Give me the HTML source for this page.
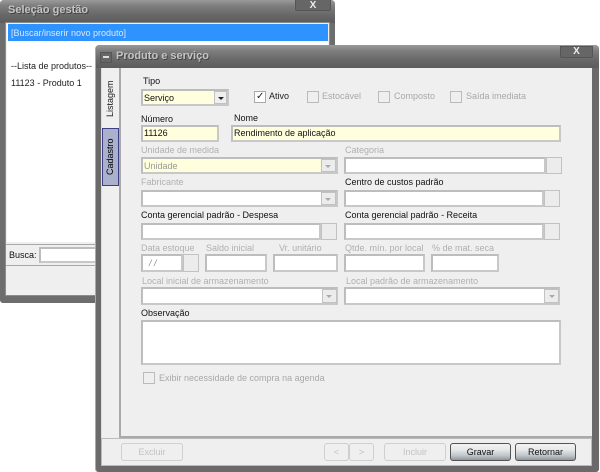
<!DOCTYPE html>
<html><head><meta charset="utf-8">
<style>
html,body{margin:0;padding:0;background:#fff}
#p{position:relative;width:600px;height:472px;overflow:hidden;background:#fff;font:9px/12px "Liberation Sans",sans-serif;color:#222}
#p div,#p span.t{position:absolute;box-sizing:border-box;white-space:nowrap}
.l{color:#111;height:12px}
.g{color:#b0b0b0}
.d{color:#a8a8a8}
.i{background:#fff;border:2px solid #bdbdbd;border-right-color:#c8c8c8;border-bottom-color:#c8c8c8}
.y{background:#ffffdd}
.cb{background:#ececec;border:1px solid #c2c2c2}
.ar{width:0;height:0;border-left:3px solid transparent;border-right:3px solid transparent;border-top:3px solid #aaa}
.ck{width:12px;height:12px;border:1px solid #bbb;background:#efefef}
.btn{border:1px solid #cfcfcf;border-radius:3px;background:#efefef;color:#c2c2c2;text-align:center;line-height:16px;height:18px}
.bt{border:1px solid #555;border-radius:3px;background:linear-gradient(#f3f3f3 0,#e6e9ea 35%,#bcc2c6 75%,#8e9499 100%);color:#111;text-align:center;line-height:16px;height:18px}
.tb{background:linear-gradient(#9a9a9a 0,#7e7e7e 25%,#6a6a6a 60%,#5c5c5c 100%)}
</style></head><body>
<div id="p">
<!-- back window -->
<div style="left:0;top:0;width:335px;height:303px;background:#6d6d6d;border-radius:4px 4px 3px 3px"></div>
<div class="tb" style="left:0;top:0;width:335px;height:23px;border-radius:4px 4px 0 0"></div>
<div style="left:8px;top:3px;font:bold 11px/14px 'Liberation Sans',sans-serif;color:#c4c4c4;text-shadow:1px 1px 0 #444">Seleção gestão</div>
<div style="left:295px;top:-1px;width:36px;height:12px;background:#666;border:1px solid #555;border-top:0;border-radius:0 0 2px 2px"></div>
<div style="left:295px;top:0;width:36px;height:12px;color:#eee;font:bold 10px/12px 'Liberation Sans',sans-serif;text-align:center">X</div>
<div style="left:5px;top:22px;width:325px;height:274px;background:#efefef;border:1px solid #8c8c8c"></div>
<div style="left:7px;top:24px;width:321px;height:218px;background:#fff"></div>
<div style="left:8px;top:24px;width:320px;height:17px;background:#2f93ff"></div>
<div style="left:11px;top:27px;color:#dbe9fb">[Buscar/inserir novo produto]</div>
<div style="left:11px;top:60px;color:#222">--Lista de produtos--</div>
<div style="left:11px;top:77px;color:#222">11123 - Produto 1</div>
<div style="left:6px;top:244px;width:324px;height:1px;background:#a8a8a8"></div>
<div style="left:6px;top:265px;width:324px;height:1px;background:#a8a8a8"></div>
<div style="left:9px;top:249px;color:#111">Busca:</div>
<div class="i" style="left:39px;top:247px;width:290px;height:16px"></div>

<!-- front window -->
<div style="left:96px;top:45px;width:503px;height:427px;background:#6a6a6a;border-radius:4px 4px 3px 3px;box-shadow:-1px 0 0 #aaa"></div>
<div class="tb" style="left:96px;top:45px;width:503px;height:23px;border-radius:4px 4px 0 0"></div>
<div style="left:100px;top:52px;width:12px;height:11px;background:#666;border:1px solid #555"></div>
<div style="left:103px;top:56px;width:6px;height:2px;background:#ddd"></div>
<div style="left:116px;top:49px;font:bold 11px/14px 'Liberation Sans',sans-serif;color:#c4c4c4;text-shadow:1px 1px 0 #444">Produto e serviço</div>
<div style="left:560px;top:46px;width:33px;height:12px;background:#666;border:1px solid #555;border-radius:0 0 2px 2px"></div>
<div style="left:560px;top:46px;width:33px;height:12px;color:#eee;font:bold 10px/12px 'Liberation Sans',sans-serif;text-align:center">X</div>
<div style="left:101px;top:68px;width:491px;height:398px;background:#efefef;border-left:1px solid #ddd"></div>
<div style="left:119px;top:68px;width:2px;height:370px;background:#aaa"></div>
<div style="left:119px;top:436px;width:473px;height:2px;background:#aaa"></div>
<div style="left:101px;top:438px;width:491px;height:28px;border:1px solid #bbb;border-top:1px solid #bbb"></div>
<div style="left:102px;top:128px;width:17px;height:58px;background:#abb0cd;border:1px solid #3d3f86"></div>
<div style="left:103px;top:79px;width:14px;height:40px;color:#222;writing-mode:vertical-rl;transform:rotate(180deg);text-align:center;line-height:14px">Listagem</div>
<div style="left:103px;top:130px;width:14px;height:54px;color:#000;writing-mode:vertical-rl;transform:rotate(180deg);text-align:center;line-height:14px">Cadastro</div>

<!-- row tipo -->
<div class="l" style="left:143px;top:75px">Tipo</div>
<div class="i y" style="left:141px;top:89px;width:88px;height:17px"></div>
<div style="left:144px;top:92px;color:#111">Serviço</div>
<div class="cb" style="left:214px;top:91px;width:13px;height:13px;background:#efefef"></div>
<div class="ar" style="left:218px;top:97px;border-top-color:#222"></div>
<div class="ck" style="left:254px;top:91px;border-color:#aaa;background:#fff"></div>
<div style="left:256px;top:90px;font:bold 10px/13px 'DejaVu Sans',sans-serif;color:#222">✓</div>
<div class="l" style="left:269px;top:90px;color:#222">Ativo</div>
<div class="ck" style="left:307px;top:91px"></div><div class="d" style="left:322px;top:90px">Estocável</div>
<div class="ck" style="left:378px;top:91px"></div><div class="d" style="left:394px;top:90px">Composto</div>
<div class="ck" style="left:450px;top:91px"></div><div class="d" style="left:466px;top:90px">Saída imediata</div>

<!-- numero nome -->
<div class="l" style="left:141px;top:113px">Número</div>
<div class="l" style="left:234px;top:112px">Nome</div>
<div class="i y" style="left:141px;top:125px;width:78px;height:17px"></div>
<div style="left:144px;top:127px;color:#111">11126</div>
<div class="i y" style="left:231px;top:125px;width:330px;height:17px"></div>
<div style="left:234px;top:127px;color:#111">Rendimento de aplicação</div>

<!-- unidade / categoria -->
<div class="l g" style="left:141px;top:144px">Unidade de medida</div>
<div class="l g" style="left:345px;top:144px">Categoria</div>
<div class="i y" style="left:141px;top:157px;width:197px;height:17px"></div>
<div style="left:144px;top:160px;color:#999">Unidade</div>
<div class="cb" style="left:321px;top:159px;width:15px;height:13px"></div><div class="ar" style="left:325px;top:165px"></div>
<div class="i" style="left:344px;top:157px;width:202px;height:17px"></div>
<div class="cb" style="left:546px;top:157px;width:16px;height:17px"></div>

<!-- fabricante / centro -->
<div class="l g" style="left:141px;top:176px">Fabricante</div>
<div class="l" style="left:345px;top:176px">Centro de custos padrão</div>
<div class="i" style="left:141px;top:190px;width:197px;height:17px"></div>
<div class="cb" style="left:321px;top:192px;width:15px;height:13px"></div><div class="ar" style="left:325px;top:198px"></div>
<div class="i" style="left:344px;top:190px;width:200px;height:17px"></div>
<div class="cb" style="left:544px;top:190px;width:16px;height:17px"></div>

<!-- contas -->
<div class="l" style="left:141px;top:209px">Conta gerencial padrão - Despesa</div>
<div class="l" style="left:345px;top:209px">Conta gerencial padrão - Receita</div>
<div class="i" style="left:141px;top:223px;width:180px;height:17px"></div>
<div class="cb" style="left:321px;top:223px;width:16px;height:17px"></div>
<div class="i" style="left:344px;top:223px;width:200px;height:17px"></div>
<div class="cb" style="left:544px;top:223px;width:16px;height:17px"></div>

<!-- estoque -->
<div class="l g" style="left:141px;top:242px">Data estoque</div>
<div class="l g" style="left:206px;top:242px">Saldo inicial</div>
<div class="l g" style="left:279px;top:242px">Vr. unitário</div>
<div class="l g" style="left:345px;top:242px">Qtde. mín. por local</div>
<div class="l g" style="left:432px;top:242px">% de mat. seca</div>
<div class="i" style="left:141px;top:254px;width:42px;height:18px"></div>
<div style="left:149px;top:257px;color:#888;font-style:italic">/ /</div>
<div class="cb" style="left:183px;top:254px;width:16px;height:18px"></div>
<div class="i" style="left:205px;top:254px;width:62px;height:18px"></div>
<div class="i" style="left:273px;top:254px;width:65px;height:18px"></div>
<div class="i" style="left:344px;top:254px;width:81px;height:18px"></div>
<div class="i" style="left:431px;top:254px;width:68px;height:18px"></div>

<!-- local -->
<div class="l g" style="left:142px;top:275px">Local inicial de armazenamento</div>
<div class="l g" style="left:346px;top:275px">Local padrão de armazenamento</div>
<div class="i" style="left:141px;top:287px;width:197px;height:18px"></div>
<div class="cb" style="left:322px;top:289px;width:15px;height:14px"></div><div class="ar" style="left:326px;top:295px"></div>
<div class="i" style="left:344px;top:287px;width:216px;height:18px"></div>
<div class="cb" style="left:544px;top:289px;width:15px;height:14px"></div><div class="ar" style="left:549px;top:295px"></div>

<!-- obs -->
<div class="l" style="left:141px;top:307px">Observação</div>
<div class="i" style="left:141px;top:320px;width:420px;height:45px"></div>
<div class="ck" style="left:143px;top:372px"></div>
<div class="d" style="left:159px;top:372px">Exibir necessidade de compra na agenda</div>

<!-- buttons -->
<div class="btn" style="left:121px;top:443px;width:62px">Excluir</div>
<div class="btn" style="left:324px;top:443px;width:25px">&lt;</div>
<div class="btn" style="left:349px;top:443px;width:25px">&gt;</div>
<div class="btn" style="left:384px;top:443px;width:62px">Incluir</div>
<div class="bt" style="left:450px;top:443px;width:61px">Gravar</div>
<div class="bt" style="left:515px;top:443px;width:61px">Retornar</div>
</div>
</body></html>
